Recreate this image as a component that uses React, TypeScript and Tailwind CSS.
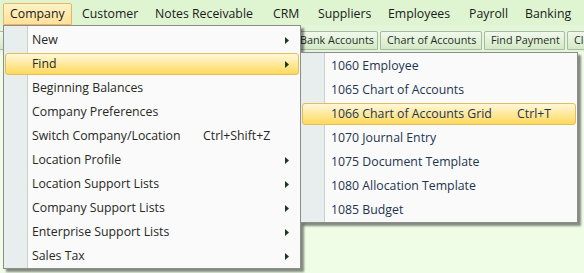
import React from "react";

const topItems = [
  { label: "Company", w: "w-[72px]", active: true },
  { label: "Customer", w: "w-[73px]" },
  { label: "Notes Receivable", w: "w-[118px]" },
  { label: "CRM", w: "w-[45px]" },
  { label: "Suppliers", w: "w-[70px]" },
  { label: "Employees", w: "w-[81px]" },
  { label: "Payroll", w: "w-[56px]" },
  { label: "Banking", w: "w-[60px]" },
];

// first three tabs sit under the open menu
const tabs = [
  { label: "", w: "w-[96px]" },
  { label: "", w: "w-[98px]" },
  { label: "", w: "w-[97px]" },
  { label: "Bank Accounts", w: "w-[85px]" },
  { label: "Chart of Accounts", w: "w-[102px]" },
  { label: "Find Payment", w: "w-[81px]" },
  { label: "Close", w: "w-[50px]" },
];

type Item = { label: string; shortcut?: string; sub?: boolean; active?: boolean };

const companyMenu: Item[] = [
  { label: "New", sub: true },
  { label: "Find", sub: true, active: true },
  { label: "Beginning Balances" },
  { label: "Company Preferences" },
  { label: "Switch Company/Location", shortcut: "Ctrl+Shift+Z" },
  { label: "Location Profile", sub: true },
  { label: "Location Support Lists", sub: true },
  { label: "Company Support Lists", sub: true },
  { label: "Enterprise Support Lists", sub: true },
  { label: "Sales Tax", sub: true },
];

const findMenu: Item[] = [
  { label: "1060 Employee" },
  { label: "1065 Chart of Accounts" },
  { label: "1066 Chart of Accounts Grid", shortcut: "Ctrl+T", active: true },
  { label: "1070 Journal Entry" },
  { label: "1075 Document Template" },
  { label: "1080 Allocation Template" },
  { label: "1085 Budget" },
];

const Arrow = () => (
  <svg width="4" height="7" viewBox="0 0 4 7" className="shrink-0">
    <path d="M0 0 L4 3.5 L0 7 Z" fill="#1c3a1c" />
  </svg>
);

const MenuRow = ({ item, labelW, textPl, color }: { item: Item; labelW: string; textPl: string; color: string }) => (
  <div className="h-[24px] p-[1px]">
    <div
      className={`h-full flex items-center rounded-[3px] border ${textPl} pr-[9px] ${
        item.active
          ? "border-[#e2bf5c] bg-[linear-gradient(to_bottom,#fff8d9_0%,#ffeaa3_45%,#ffd95c_100%)]"
          : "border-transparent"
      }`}
    >
      <span className={`${item.shortcut ? labelW : ""} shrink-0 whitespace-nowrap ${color}`}>{item.label}</span>
      {item.shortcut && <span className={`whitespace-nowrap ${color}`}>{item.shortcut}</span>}
      {item.sub && (
        <span className="ml-auto">
          <Arrow />
        </span>
      )}
    </div>
  </div>
);

export default function App() {
  return (
    <div
      className="relative w-[584px] h-[273px] overflow-hidden bg-[#effde6] text-[12.3px] leading-none"
      style={{ fontFamily: '"Segoe UI", "Open Sans", sans-serif' }}
    >
      {/* menu bar */}
      <div className="h-[25px] bg-[#dff5d2] pl-[3px] pt-[3px] flex">
        {topItems.map((t) =>
          t.active ? (
            <div key={t.label} className={`${t.w} shrink-0 pr-[3px]`}>
              <div className="h-[22px] flex items-center px-[6px] pt-[1px] border border-[#eeb45e] rounded-t-[2px] bg-[linear-gradient(to_bottom,#fff3c6,#ffe19a)] text-[#1a1a1a]">
                {t.label}
              </div>
            </div>
          ) : (
            <div key={t.label} className={`${t.w} shrink-0 h-[22px] flex items-center pl-[7px] pt-[1px] text-[#1a1a1a] whitespace-nowrap`}>
              {t.label}
            </div>
          )
        )}
      </div>

      {/* tab strip */}
      <div className="h-[27px] bg-[#e4f6d9] pt-[6px] flex gap-[2px] ml-[-4px]">
        {tabs.map((t, i) => (
          <div
            key={i}
            className={`${t.w} shrink-0 h-[19px] flex items-center pl-[6px] whitespace-nowrap overflow-hidden rounded-t-[2px] border border-[#a9bca3] bg-[linear-gradient(to_bottom,#f1f9ec,#d3e9c6)] text-[#1f2f1f] text-[10.8px]`}
          >
            {t.label}
          </div>
        ))}
      </div>

      {/* company dropdown */}
      <div className="absolute left-[3px] top-[25px] w-[298px] border border-[#8d8d8d] pt-[2px] bg-[linear-gradient(to_right,#e8eeee_23px,#c9d1d1_23px,#c9d1d1_24px,#fafafa_24px)] shadow-[3px_3px_2px_rgba(0,0,0,0.45)]">
        {companyMenu.map((it) => (
          <MenuRow key={it.label} item={it} labelW="w-[171px]" textPl="pl-[26px]" color="text-[#27291f]" />
        ))}
      </div>

      {/* find submenu */}
      <div className="absolute left-[300px] top-[52px] w-[278px] border border-[#8d8d8d] pt-[1px] bg-[linear-gradient(to_right,#e8eeee_23px,#c9d1d1_23px,#c9d1d1_24px,#fafafa_24px)] shadow-[3px_3px_2px_rgba(0,0,0,0.45)]">
        {findMenu.map((it) => (
          <MenuRow key={it.label} item={it} labelW="w-[186px]" textPl="pl-[28px]" color="text-[#1d3550]" />
        ))}
      </div>
    </div>
  );
}
